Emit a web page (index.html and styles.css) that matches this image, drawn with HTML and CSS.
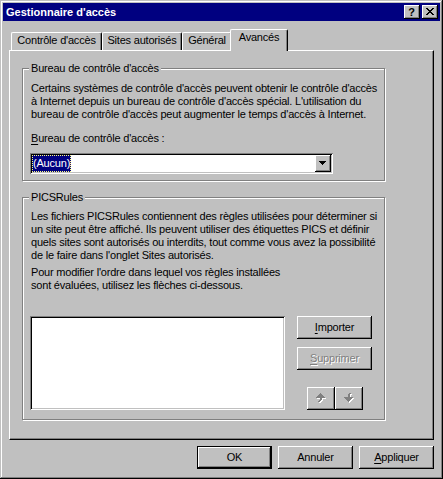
FILE: index.html
```html
<!DOCTYPE html>
<html lang="fr">
<head>
<meta charset="utf-8">
<title>Gestionnaire d'accès</title>
<link rel="stylesheet" href="styles.css">
</head>
<body>
<div class="window">
  <div class="titlebar">
    <span class="title">Gestionnaire d'accès</span>
    <div class="title-buttons">
      <div class="tbtn help">?</div>
      <div class="tbtn close">
        <svg width="8" height="7" viewBox="0 0 8 7" shape-rendering="crispEdges">
          <path fill="#000" d="M0 0h2v1h-2zM6 0h2v1h-2zM1 1h2v1h-2zM5 1h2v1h-2zM2 2h4v1h-4zM3 3h2v1h-2zM2 4h4v1h-4zM1 5h2v1h-2zM5 5h2v1h-2zM0 6h2v1h-2zM6 6h2v1h-2z"/>
        </svg>
      </div>
    </div>
  </div>
  <div class="body">
    <div class="tabs">
      <div class="tab tab-controle">Contrôle d'accès</div>
      <div class="tab tab-sites">Sites autorisés</div>
      <div class="tab tab-general">Général</div>
      <div class="tab tab-avances active">Avancés</div>
    </div>
    <div class="panel">
      <div class="group group-bureau">
        <span class="group-label">Bureau de contrôle d'accès</span>
        <p class="desc">Certains systèmes de contrôle d'accès peuvent obtenir le contrôle d'accès<br>à Internet depuis un bureau de contrôle d'accès spécial. L'utilisation du<br>bureau de contrôle d'accès peut augmenter le temps d'accès à Internet.</p>
        <div class="field-label"><u>B</u>ureau de contrôle d'accès :</div>
        <div class="combo">
          <div class="combo-value"><span class="selection">(Aucun)</span></div>
          <div class="combo-btn">
            <svg width="7" height="4" viewBox="0 0 7 4" shape-rendering="crispEdges"><path fill="#000" d="M0 0h7v1h-7zM1 1h5v1h-5zM2 2h3v1h-3zM3 3h1v1h-1z"/></svg>
          </div>
        </div>
      </div>
      <div class="group group-pics">
        <span class="group-label">PICSRules</span>
        <p class="desc">Les fichiers PICSRules contiennent des règles utilisées pour déterminer si<br>un site peut être affiché. Ils peuvent utiliser des étiquettes PICS et définir<br>quels sites sont autorisés ou interdits, tout comme vous avez la possibilité<br>de le faire dans l'onglet Sites autorisés.</p>
        <p class="desc desc-next">Pour modifier l'ordre dans lequel vos règles installées<br>sont évaluées, utilisez les flèches ci-dessous.</p>
        <div class="rules-row">
          <div class="listbox"></div>
          <div class="rules-buttons">
            <div class="btn"><span><u>I</u>mporter</span></div>
            <div class="btn disabled"><span><u>S</u>upprimer</span></div>
            <div class="arrows">
              <div class="btn arrow-btn">
                <svg width="11" height="11" viewBox="0 0 11 11" shape-rendering="crispEdges">
                  <path fill="#fff" transform="translate(1,1)" d="M4 0h1v1h-1zM3 1h3v1h-3zM2 2h5v1h-5zM1 3h7v1h-7zM0 4h9v1h-9zM4 5h2v2h-2zM3 7h2v1h-2zM2 8h2v1h-2z"/>
                  <path fill="#808080" d="M4 0h1v1h-1zM3 1h3v1h-3zM2 2h5v1h-5zM1 3h7v1h-7zM0 4h9v1h-9zM4 5h2v2h-2zM3 7h2v1h-2zM2 8h2v1h-2z"/>
                </svg>
              </div>
              <div class="btn arrow-btn">
                <svg width="11" height="11" viewBox="0 0 11 11" shape-rendering="crispEdges">
                  <path fill="#fff" transform="translate(1,1)" d="M5 0h2v1h-2zM4 1h2v1h-2zM4 2h2v2h-2zM0 4h9v1h-9zM1 5h7v1h-7zM2 6h5v1h-5zM3 7h3v1h-3zM4 8h1v1h-1z"/>
                  <path fill="#808080" d="M5 0h2v1h-2zM4 1h2v1h-2zM4 2h2v2h-2zM0 4h9v1h-9zM1 5h7v1h-7zM2 6h5v1h-5zM3 7h3v1h-3zM4 8h1v1h-1z"/>
                </svg>
              </div>
            </div>
          </div>
        </div>
      </div>
    </div>
    <div class="footer">
      <div class="btn default">OK</div>
      <div class="btn">Annuler</div>
      <div class="btn"><span><u>A</u>ppliquer</span></div>
    </div>
  </div>
</div>
</body>
</html>
```
FILE: styles.css
```css
* { box-sizing: border-box; }
html, body { margin: 0; padding: 0; }
body {
  font-family: "Liberation Sans", Arial, sans-serif;
  font-size: 11px;
  line-height: 13px;
  letter-spacing: -0.2px;
  color: #000;
  background: #c0c0c0;
}
.window {
  width: 443px;
  height: 479px;
  padding: 3px;
  background: #c0c0c0;
  box-shadow: inset -1px -1px #000, inset 1px 1px #c0c0c0, inset -2px -2px #808080, inset 2px 2px #fff;
  display: flex;
  flex-direction: column;
}
.titlebar {
  height: 18px;
  flex: none;
  background: #000080;
  color: #fff;
  display: flex;
  align-items: center;
  justify-content: space-between;
  padding: 0 2px 0 3px;
}
.title { font-weight: bold; letter-spacing: 0; }
.title-buttons { display: flex; gap: 2px; }
.tbtn {
  width: 16px;
  height: 14px;
  background: #c0c0c0;
  box-shadow: inset -1px -1px #000, inset 1px 1px #fff, inset -2px -2px #808080;
  display: flex;
  align-items: center;
  justify-content: center;
  color: #000;
  font-weight: bold;
  font-size: 11px;
  line-height: 11px;
  letter-spacing: 0;
}
.tbtn.help { padding: 1px 1px 0 0; }
.tbtn.close { padding: 0 1px 1px 0; }
.body {
  flex: 1;
  padding: 8px 6px 0;
  display: flex;
  flex-direction: column;
}
.tabs {
  display: flex;
  align-items: flex-end;
  padding-left: 2px;
  height: 21px;
  flex: none;
}
.tab {
  height: 18px;
  background: #c0c0c0;
  border-top: 1px solid #fff;
  border-left: 1px solid #fff;
  border-right: 1px solid #000;
  border-radius: 2px 2px 0 0;
  box-shadow: inset -1px 0 #808080;
  padding-top: 1px;
  text-align: center;
  white-space: nowrap;
}
.tab-controle { width: 91px; }
.tab-sites { width: 80px; }
.tab-general { width: 50px; }
.tab-avances { width: 58px; }
.tab.active {
  height: 22px;
  margin-bottom: -1px;
  margin-left: -2px;
  position: relative;
  z-index: 1;
}
.panel {
  height: 390px;
  flex: none;
  border: 1px solid;
  border-color: #fff #000 #000 #fff;
  box-shadow: inset -1px -1px #808080;
  padding: 17px 0 0 12px;
}
.group {
  position: relative;
  width: 363px;
  border: 1px solid #808080;
  box-shadow: 1px 1px #fff, inset 1px 1px #fff;
  padding: 13px 0 6px 7px;
}
.group-pics {
  margin-top: 16px;
  padding-top: 12px;
  padding-bottom: 9px;
}
.group-label {
  position: absolute;
  top: -7px;
  left: 6px;
  padding: 0 2px;
  background: #c0c0c0;
  white-space: nowrap;
}
.desc {
  margin: 0;
  padding-left: 1px;
  white-space: nowrap;
}
.desc-next { margin-top: 4px; }
.field-label {
  margin-top: 11px;
  padding-left: 1px;
}
u { text-decoration-thickness: 1px; text-underline-offset: 2px; }
.combo {
  margin-top: 8px;
  width: 303px;
  height: 21px;
  background: #fff;
  padding: 2px;
  box-shadow: inset 1px 1px #808080, inset -1px -1px #fff, inset 2px 2px #000, inset -2px -2px #c0c0c0;
  display: flex;
}
.combo-value { flex: 1; display: flex; }
.selection {
  height: 17px;
  padding: 2px 1px 0 1px;
  background: #000080;
  color: #fff;
  outline: 1px dotted #ffff80;
  outline-offset: -1px;
}
.combo-btn {
  width: 16px;
  height: 17px;
  background: #c0c0c0;
  box-shadow: inset -1px -1px #000, inset 1px 1px #fff, inset -2px -2px #808080;
  display: flex;
  align-items: center;
  justify-content: center;
  padding: 0 1px 1px 0;
}
.rules-row {
  margin-top: 24px;
  display: flex;
  gap: 12px;
}
.listbox {
  width: 255px;
  height: 94px;
  background: #fff;
  box-shadow: inset 1px 1px #808080, inset -1px -1px #fff, inset 2px 2px #000, inset -2px -2px #c0c0c0;
}
.rules-buttons {
  width: 75px;
  display: flex;
  flex-direction: column;
}
.btn {
  width: 75px;
  height: 23px;
  flex: none;
  background: #c0c0c0;
  box-shadow: inset -1px -1px #000, inset 1px 1px #fff, inset -2px -2px #808080;
  display: flex;
  align-items: center;
  justify-content: center;
  padding-bottom: 1px;
  white-space: nowrap;
}
.rules-buttons > .btn + .btn { margin-top: 8px; }
.btn.disabled { color: #808080; text-shadow: 1px 1px #fff; }
.arrows {
  margin-top: 17px;
  display: flex;
  justify-content: center;
}
.btn.arrow-btn { width: 28px; padding: 0 0 1px 1px; }
.footer {
  display: flex;
  justify-content: flex-end;
  gap: 6px;
  margin-top: 6px;
}
.btn.default { border: 1px solid #000; }
```
